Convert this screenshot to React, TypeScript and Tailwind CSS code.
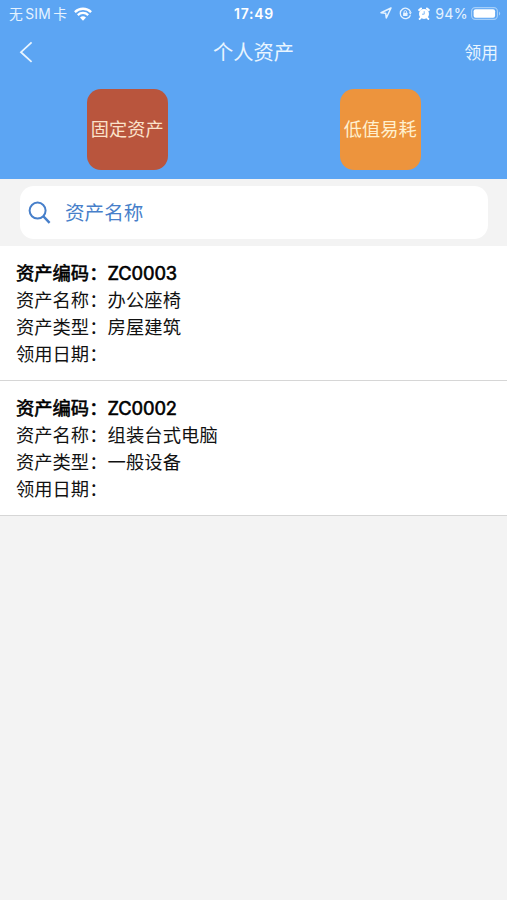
import React from "react";

type Asset = { code: string; name: string; type: string; date: string };

const assets: Asset[] = [
  { code: "ZC0003", name: "办公座椅", type: "房屋建筑", date: "" },
  { code: "ZC0002", name: "组装台式电脑", type: "一般设备", date: "" },
];

function Row({ label, value, strong }: { label: string; value: string; strong?: boolean }) {
  return (
    <div className={strong ? "flex h-[27px] items-center [-webkit-text-stroke:0.6px_#000]" : "flex h-[27px] items-center text-[#111]"}>
      <span className="flex w-[91.5px] shrink-0">
        {label}
        <span>：</span>
      </span>
      <span className={strong ? "tracking-[-0.1px]" : "tracking-[0.1px]"}>{value}</span>
    </div>
  );
}

function StatusBar() {
  return (
    <div className="flex h-[27px] items-center text-[#e6f3ff]">
      <div className="flex w-[234px] items-center pl-[9px]">
        <span className="flex w-[58px] justify-between whitespace-nowrap pt-[1px] text-[13.8px]">
          <span>无</span>
          <span className="tracking-[0.2px]">SIM</span>
          <span>卡</span>
        </span>
        <svg className="ml-[7px] h-[14px] w-[18px]" viewBox="0 0 18 14" fill="none" stroke="#fff" strokeWidth="2.3">
          <path d="M0.9 5.1a11.5 11.5 0 0 1 16.2 0" />
          <path d="M3.8 8.1a7.4 7.4 0 0 1 10.4 0" />
          <path d="M9 13.7 6 10.6a4.3 4.3 0 0 1 6 0z" fill="#fff" stroke="none" />
        </svg>
      </div>
      <span className="text-[14px] font-semibold tracking-[0.75px] text-white">17:49</span>
      <div className="flex flex-1 items-center justify-end pr-[6px]">
        <svg className="mr-[7px] size-[12px]" viewBox="0 0 12 12" fill="none" stroke="currentColor" strokeWidth="1.5" strokeLinejoin="round">
          <path d="M11 1 1 5.7l4.7.6.6 4.7z" />
        </svg>
        <svg className="mr-[6px] h-[13px] w-[13px]" viewBox="0 0 13 13" fill="none" stroke="currentColor" strokeWidth="1.3">
          <path d="M11.4 8.2A5.2 5.2 0 1 1 11.5 5" />
          <path d="M9.8 5.3h3L11.3 7.7z" fill="currentColor" stroke="none" />
          <rect x="4.1" y="5.8" width="4.4" height="3.3" rx=".4" fill="currentColor" stroke="none" />
          <path d="M5 6V4.9a1.3 1.3 0 0 1 2.6 0V6" strokeWidth=".9" />
        </svg>
        <svg className="mr-[5px] h-[13px] w-[12px]" viewBox="0 0 12 13" fill="none">
          <circle cx="6" cy="6.9" r="5" fill="#fff" />
          <path d="M1.2 3 3 1.5M10.8 3 9 1.5M2.7 10.8l-1 1.1M9.3 10.8l1 1.1" stroke="#fff" strokeWidth="2" strokeLinecap="round" />
          <path d="M6.2 4.2v3H4" stroke="#7db8f6" strokeWidth="1" />
        </svg>
        <span className="mr-[3px] text-[14.2px] tracking-[0.3px]">94%</span>
        <svg className="h-[13px] w-[30px]" viewBox="0 0 30 13" fill="none">
          <rect x=".6" y=".6" width="25.8" height="11.8" rx="3.6" stroke="#a5cff9" strokeWidth="1.1" />
          <rect x="2.6" y="2.3" width="21.5" height="8.4" rx="2" fill="#fff" />
          <path d="M28 4.4c1.6.8 1.6 3.4 0 4.2z" fill="#a5cff9" />
        </svg>
      </div>
    </div>
  );
}

export default function App() {
  return (
    <div className="min-h-[900px] w-full overflow-hidden bg-[#f3f3f3] font-[Inter,'Noto_Sans_CJK_SC',sans-serif] text-black">
      <header className="h-[179px] bg-[#5ca5f3]">
        <StatusBar />
        <nav className="flex h-[50px] items-center text-[#e9f5ff]">
          <div className="w-[213px] pl-[19px]">
            <svg className="h-[22px] w-[14px]" viewBox="0 0 14 22" fill="none" stroke="currentColor" strokeWidth="1.8">
              <path d="M12.6 1.4 2 11.2l10.6 9.6" />
            </svg>
          </div>
          <h1 className="pt-[2px] text-[20.3px] leading-none">个人资产</h1>
          <div className="flex-1 pt-[2px] pr-[9px] text-right text-[16.8px] leading-none">领用</div>
        </nav>
        <div className="grid grid-cols-2 pt-[12px] text-[18.2px]">
          <div className="flex justify-center pl-[1px]">
            <div className="flex size-[81px] items-center justify-center rounded-[14px] bg-[#b9553d] whitespace-nowrap text-[#fbe2ca]">固定资产</div>
          </div>
          <div className="flex justify-center">
            <div className="flex size-[81px] items-center justify-center rounded-[14px] bg-[#ed943d] whitespace-nowrap text-[#fff0cf]">低值易耗</div>
          </div>
        </div>
      </header>
      <div className="h-[67px] pt-[7px] pl-[20px]">
        <div className="flex h-[53px] w-[468px] items-center rounded-[14px] bg-white pl-[8px] text-[#477fca]">
          <svg className="mr-[14px] size-[23px]" viewBox="0 0 23 23" fill="none" stroke="currentColor" strokeWidth="2">
            <circle cx="9.6" cy="9.6" r="8" />
            <path d="m15.2 15.2 6.4 6.6" strokeWidth="2.4" />
          </svg>
          <span className="pt-[2px] text-[19.6px] leading-none">资产名称</span>
        </div>
      </div>
      <main>
        {assets.map((a) => (
          <section key={a.code} className="h-[135px] border-b border-[#d6d6d6] bg-white px-[16px] pt-[14px] text-[18.3px]">
            <Row label="资产编码" value={a.code} strong />
            <Row label="资产名称" value={a.name} />
            <Row label="资产类型" value={a.type} />
            <Row label="领用日期" value={a.date} />
          </section>
        ))}
      </main>
    </div>
  );
}
